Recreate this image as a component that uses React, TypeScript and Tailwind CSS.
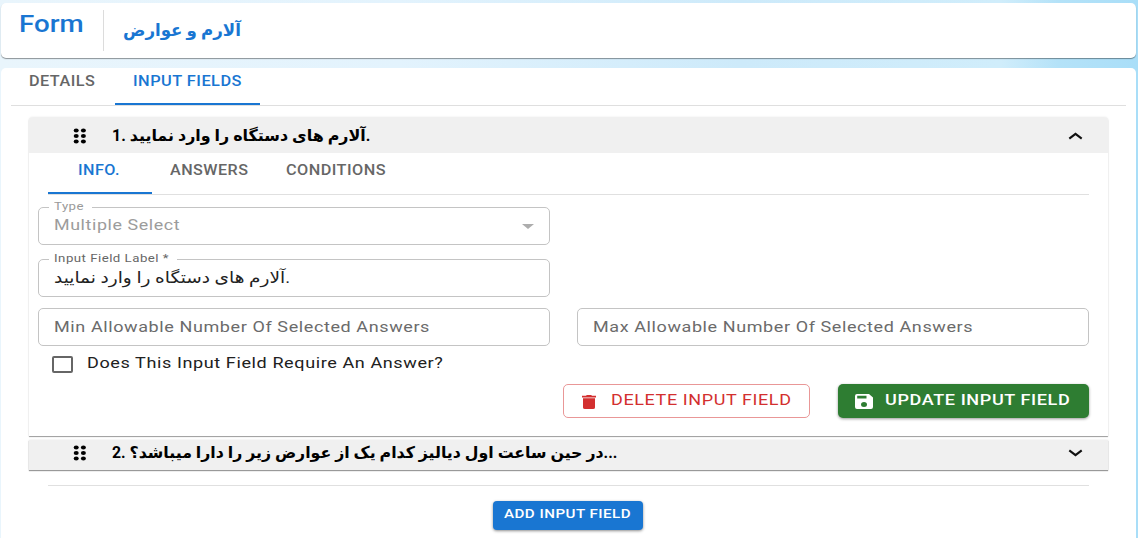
import type { ReactNode } from "react";

function Label({ children, className }: { children: ReactNode; className: string }) {
  return <span className={`block w-0 origin-left whitespace-nowrap ${className}`}>{children}</span>;
}

function DragHandle() {
  return (
    <svg className="block h-[16px] w-[14px] shrink-0" viewBox="0 0 14 16" fill="#000">
      {[2.6, 8, 13.4].map((y) => (
        <g key={y}>
          <ellipse cx="3.2" cy={y} rx="2.5" ry="2" />
          <ellipse cx="10.4" cy={y} rx="2.5" ry="2" />
        </g>
      ))}
    </svg>
  );
}

function Chevron({ up }: { up?: boolean }) {
  return (
    <svg className="block h-[8px] w-[15px] shrink-0" viewBox="0 0 15 8" fill="none" stroke="#111" strokeWidth="2.1">
      <path d={up ? "M1.3 6.7 7.5 1.9l6.2 4.8" : "M1.3 1.3 7.5 6.1l6.2-4.8"} />
    </svg>
  );
}

function Field({ children, label }: { children: ReactNode; label?: ReactNode }) {
  return (
    <div className="relative flex h-[38px] w-[512px] items-center rounded-[5px] border border-[#c4c4c4] pl-[15px]">
      {label}
      {children}
    </div>
  );
}

export default function App() {
  return (
    <div className="h-[542px] w-[1138px] overflow-hidden bg-white font-['Roboto','DejaVu_Sans',sans-serif] leading-none">
      <div className="h-[538px] bg-[linear-gradient(90deg,#e9f5fc_0%,#e3f3fd_35%,#cdeafa_65%,#d0edfb_88%,#b4e2f8_93%,#a9def8_100%)] pr-[2px] pl-px pt-[3px]">
        <header className="flex h-[55px] rounded-[5px] bg-white pl-[18px] shadow-[0_1px_1px_rgba(0,0,0,0.4)]">
          <div className="flex h-[42px] w-[84px] items-center">
            <Label className="scale-x-[1.205] text-[23px] font-medium text-[#1976d2]">Form</Label>
          </div>
          <div className="mt-[7px] h-[41px] w-px bg-[#dcdcdc]" />
          <div className="flex h-[55px] items-center pl-[19px]">
            <Label className="scale-x-[0.979] text-[17px] font-bold text-[#1976d2]">آلارم و عوارض</Label>
          </div>
        </header>

        <main className="mt-[10px] h-[480px] rounded-t-[5px] bg-white pt-px">
          <nav className="mx-[10px] flex h-[37px] border-b border-[#dfdfdf] tracking-[0.4px] text-[14px] font-medium">
            <div className="flex h-[24px] w-[104px] items-center pl-[18px]">
              <Label className="scale-x-[1.158] text-[#666]">DETAILS</Label>
            </div>
            <div className="h-[36px] w-[145px] border-b-2 border-[#1976d2] pl-[18px]">
              <div className="flex h-[24px] items-center">
                <Label className="scale-x-[1.168] text-[#1976d2]">INPUT FIELDS</Label>
              </div>
            </div>
          </nav>

          <section className="mt-[11px] ml-[28px] h-[319px] w-[1079px] rounded-t-[4px] bg-white shadow-[0_1px_1px_rgba(0,0,0,0.38),0_0_2px_rgba(0,0,0,0.1)]">
            <div className="flex h-[36px] items-center rounded-t-[4px] bg-[#f0f0f0] pt-px pl-[44px] text-[16px] font-bold">
              <DragHandle />
              <div className="w-[981px] pl-[25px]">
                <Label className="scale-x-[0.995] text-black">1. آلارم های دستگاه را وارد نمایید.</Label>
              </div>
              <Chevron up />
            </div>

            <div className="ml-[19px] flex h-[42px] w-[1041px] border-b border-[#e0e0e0] text-[14px] font-medium tracking-[0.4px]">
              <div className="h-[41px] w-[104px] border-b-2 border-[#1976d2] pl-[30px]">
                <div className="flex h-[33px] items-center">
                  <Label className="scale-x-[1.154] text-[#1976d2]">INFO.</Label>
                </div>
              </div>
              <div className="flex h-[33px] w-[116px] items-center pl-[18px]">
                <Label className="scale-x-[1.152] text-[#666]">ANSWERS</Label>
              </div>
              <div className="flex h-[33px] items-center pl-[18px]">
                <Label className="scale-x-[1.16] text-[#666]">CONDITIONS</Label>
              </div>
            </div>

            <div className="mt-[12px] ml-[9px] flex flex-col">
              <Field
                label={
                  <div className="absolute -top-[8px] left-[10px] h-[14px] w-[43px] bg-white pt-px pl-[5px]">
                    <Label className="scale-x-[1.2] text-[11px] tracking-[0.4px] text-[#999]">Type</Label>
                  </div>
                }
              >
                <div className="w-[468px] pb-px">
                  <Label className="scale-x-[1.19] text-[15px] tracking-[0.5px] text-[#9c9c9c]">Multiple Select</Label>
                </div>
                <svg className="h-[5px] w-[12px]" viewBox="0 0 12 5" fill="#adadad">
                  <path d="M0 0h12L6 5z" />
                </svg>
              </Field>
              <div className="mt-[14px]">
                <Field
                  label={
                    <div className="absolute -top-[8px] left-[10px] h-[14px] w-[128px] bg-white pt-px pl-[5px]">
                      <Label className="scale-x-[1.204] text-[11px] tracking-[0.4px] text-[#666]">Input Field Label *</Label>
                    </div>
                  }
                >
                  <Label className="scale-x-[1.157] text-[16px] text-[#222]">آلارم های دستگاه را وارد نمایید.</Label>
                </Field>
              </div>
              <div className="mt-[11px] flex gap-[27px]">
                <Field>
                  <Label className="scale-x-[1.2] text-[15px] tracking-[0.5px] text-[#6b6b6b]">Min Allowable Number Of Selected Answers</Label>
                </Field>
                <Field>
                  <Label className="scale-x-[1.199] text-[15px] tracking-[0.5px] text-[#6b6b6b]">Max Allowable Number Of Selected Answers</Label>
                </Field>
              </div>
              <div className="flex h-[34px] items-center pl-[14px]">
                <div className="mt-[2px] h-[17px] w-[21px] rounded-[2px] border-2 border-[#666]" />
                <div className="pl-[14px]">
                  <Label className="scale-x-[1.202] text-[15px] tracking-[0.5px] text-[#212121]">Does This Input Field Require An Answer?</Label>
                </div>
              </div>
            </div>

            <div className="mt-[4px] flex justify-end gap-[28px] pr-[19px] text-[15px] tracking-[0.5px]">
              <button className="flex h-[34px] w-[247px] items-center rounded-[5px] border border-[#e99797] pb-[2px] pl-[18px]">
                <svg className="mt-[3px] block h-[14px] w-[14px]" viewBox="0 0 14 14" fill="#d32f2f">
                  <path d="M0 .8h3.800L5 0h4l1.200.8H14v1.800H0zM1 3.300h12v9.200Q13 14 11 14H3Q1 14 1 12.500z" />
                </svg>
                <div className="pl-[15px]">
                  <Label className="scale-x-[1.2] text-[#d32f2f]">DELETE INPUT FIELD</Label>
                </div>
              </button>
              <button className="flex h-[34px] w-[251px] items-center rounded-[5px] bg-[#2e7d32] pb-[2px] pl-[17px] shadow-[0_1px_3px_rgba(0,0,0,0.4)]">
                <svg className="mt-[3px] block h-[15px] w-[18px]" viewBox="0 0 18 15" fill="#fff">
                  <path
                    fillRule="evenodd"
                    d="M2 0h12l4 3.500V13q0 2-2 2H2q-2 0-2-2V2q0-2 2-2zM2.200 1.800v2.800h9.300V1.800zM9 8a3 2.500 0 1 0 0 5 3 2.500 0 1 0 0-5z"
                  />
                </svg>
                <div className="pl-[12px]">
                  <Label className="scale-x-[1.203] font-medium text-white">UPDATE INPUT FIELD</Label>
                </div>
              </button>
            </div>
          </section>

          <section className="mt-[4px] ml-[28px] flex h-[30px] w-[1079px] items-center bg-[#f0f0f0] pb-[4px] pl-[44px] text-[16px] font-bold shadow-[0_1px_1px_rgba(0,0,0,0.38),0_0_2px_rgba(0,0,0,0.1)]">
            <DragHandle />
            <div className="w-[981px] pb-px pl-[25px]">
              <Label className="scale-x-[0.986] text-black">
                2. در حین ساعت اول دیالیز کدام یک از عوارض زیر را دارا میباشد؟...
              </Label>
            </div>
            <Chevron />
          </section>

          <div className="mt-[15px] ml-[47px] h-px w-[1041px] bg-[#e0e0e0]" />
          <button className="mt-[15px] ml-[492px] flex h-[29px] w-[150px] items-center rounded-[4px] bg-[#1976d2] pb-[4px] pl-[11px] shadow-[0_1px_3px_rgba(0,0,0,0.45)]">
            <Label className="scale-x-[1.165] text-[13px] font-medium tracking-[0.4px] text-white">ADD INPUT FIELD</Label>
          </button>
        </main>
      </div>
    </div>
  );
}
